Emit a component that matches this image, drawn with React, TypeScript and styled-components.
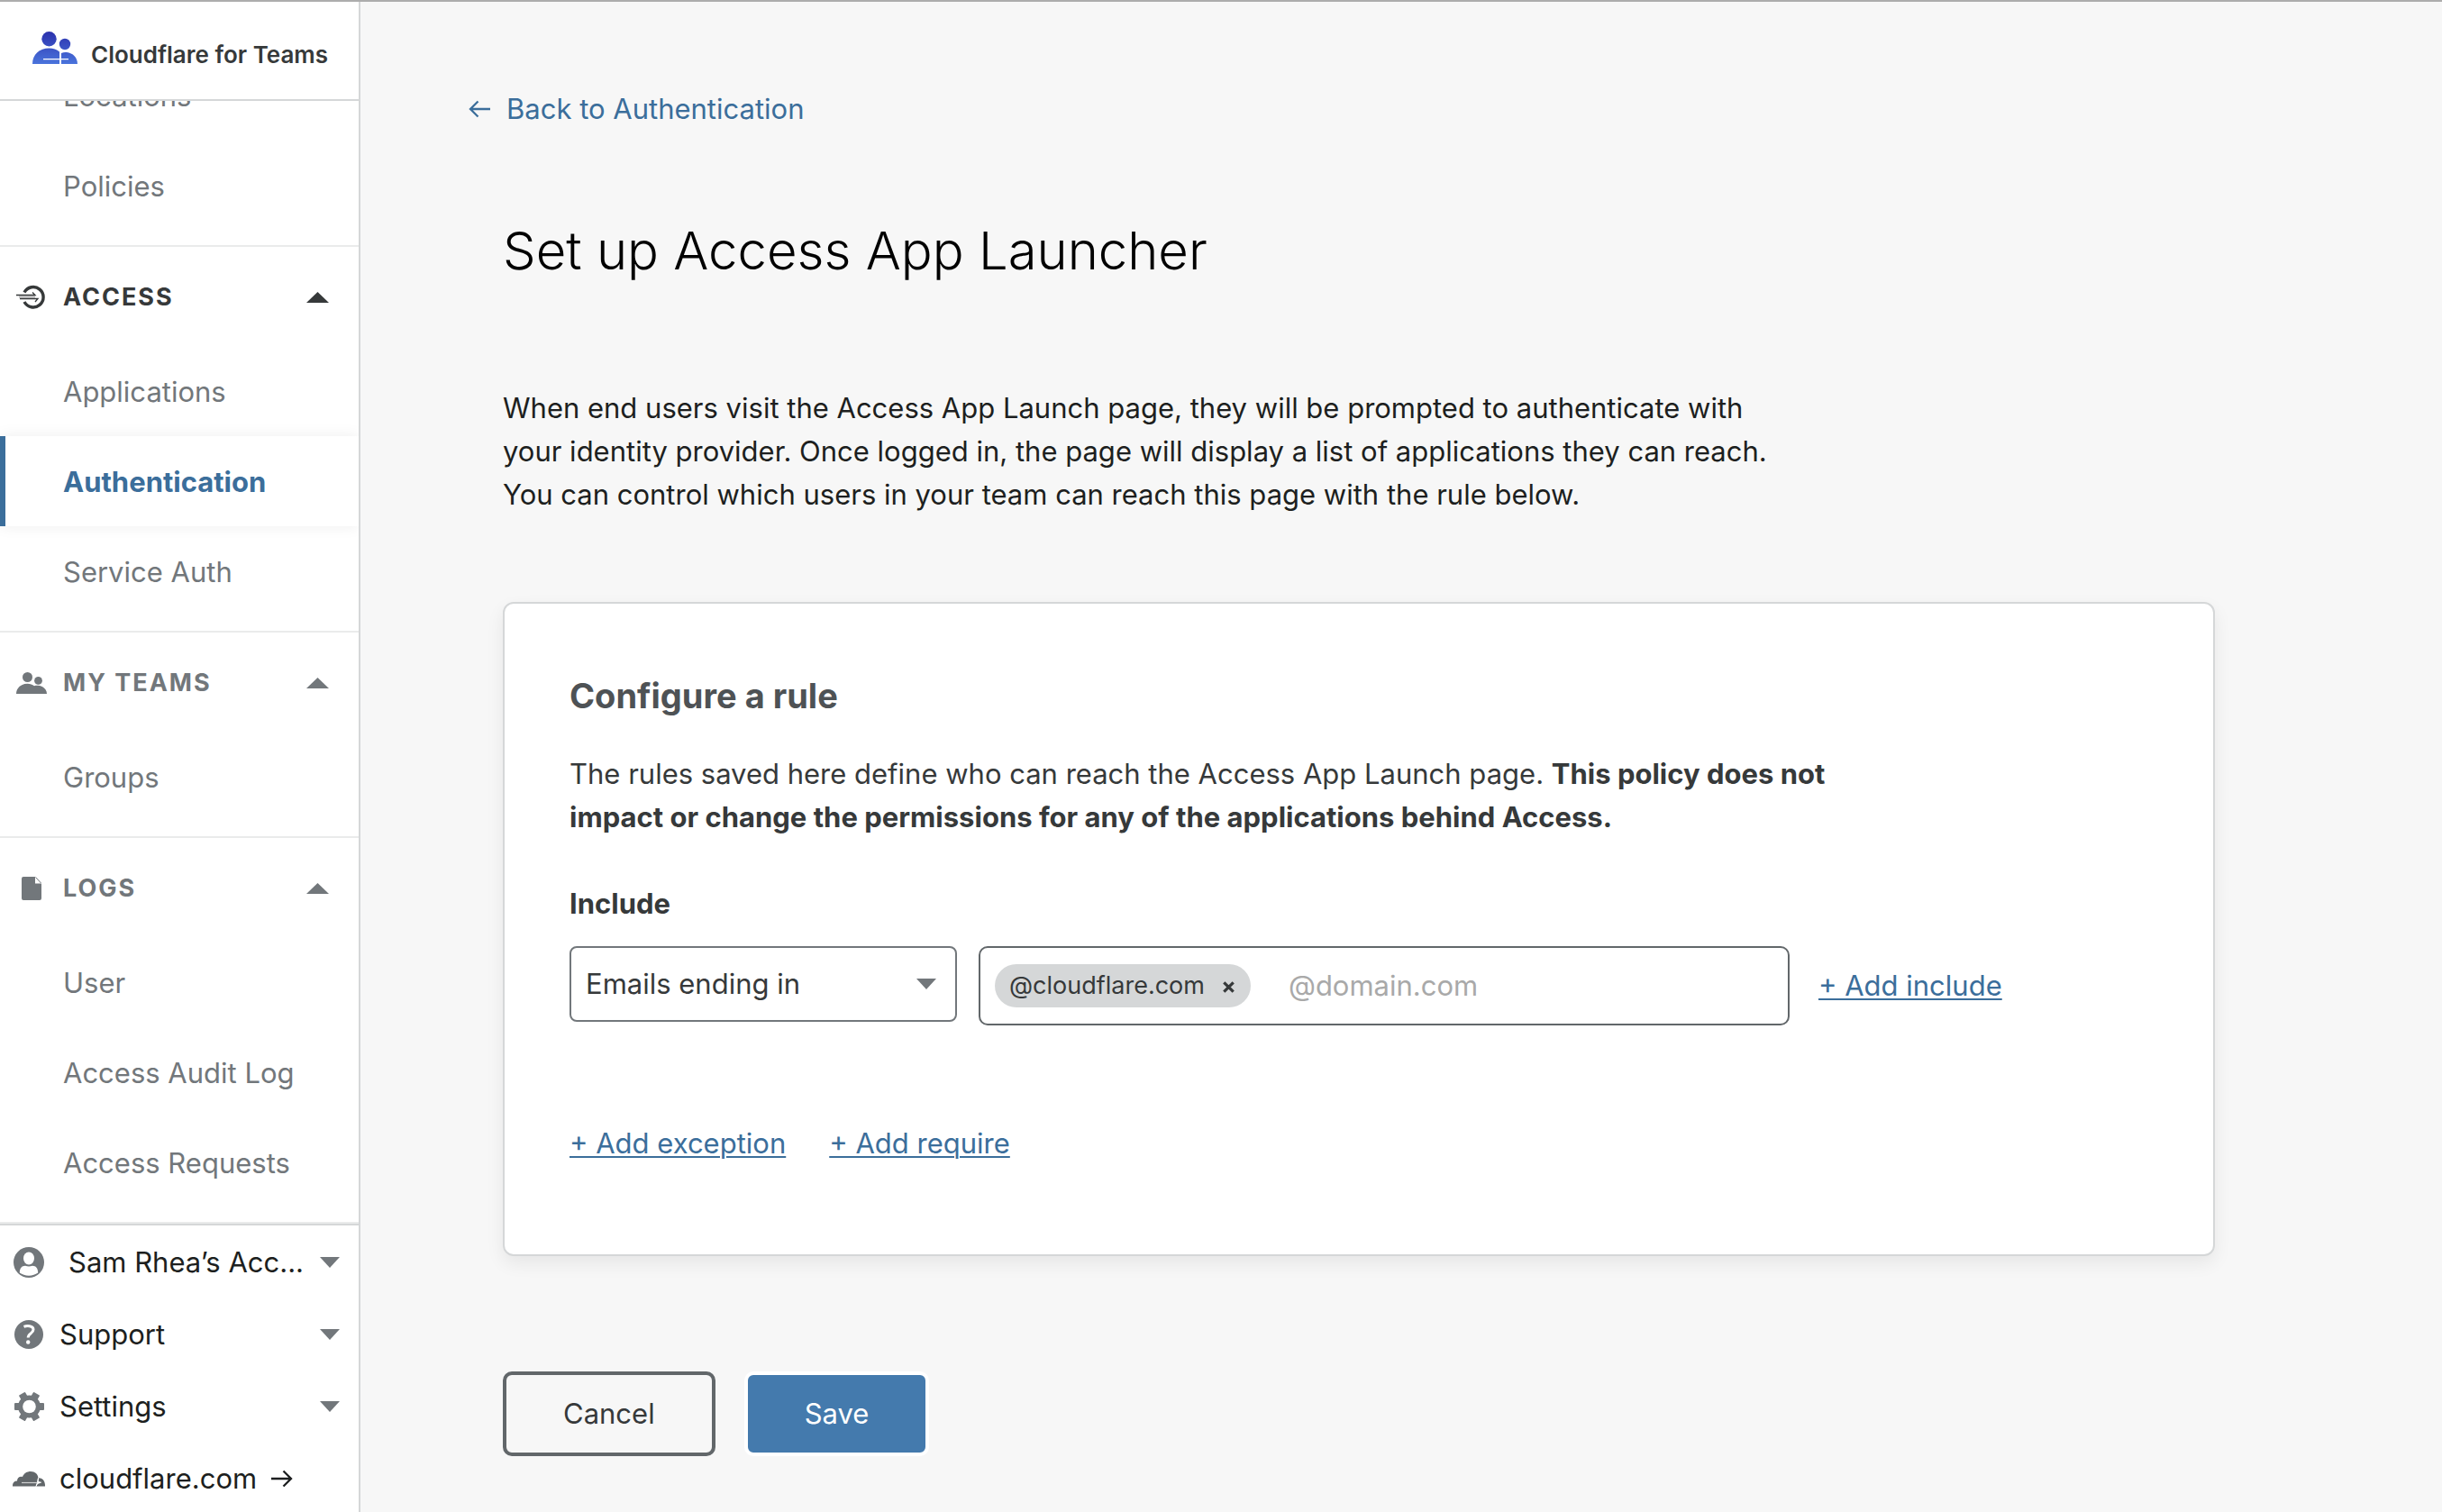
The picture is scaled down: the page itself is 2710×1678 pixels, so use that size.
import React from "react";
import styled, { createGlobalStyle } from "styled-components";

const color = {
  ink: "#1d1f20",
  dark: "#36393a",
  slate: "#4e5255",
  gray: "#72777b",
  frame: "#62676a",
  line: "#d5d7d8",
  hairline: "#eaebeb",
  page: "#f7f7f7",
  link: "#3b6e9b",
  primary: "#447aad",
};

const GlobalStyle = createGlobalStyle`
  *, *::before, *::after { box-sizing: border-box; }
  body { margin: 0; background: ${color.page}; }
  body, button, input, select {
    font-family: Inter, "Liberation Sans", sans-serif;
    font-size: 31px;
    line-height: 48px;
    color: ${color.dark};
  }
  h1, h2, h3, p, ul { margin: 0; padding: 0; }
  ul { list-style: none; }
  svg { display: block; flex: none; }
`;

const Shell = styled.div`
  display: grid;
  grid-template-columns: 400px minmax(0, 1fr);
  height: 100vh;
  border-top: 2px solid #adadad;
  overflow: hidden;
`;

const Sidebar = styled.aside`
  display: flex;
  flex-direction: column;
  min-height: 0;
  background: #fff;
  border-right: 2px solid ${color.line};
`;

const Brand = styled.header`
  flex: none;
  display: flex;
  align-items: center;
  gap: 15px;
  height: 110px;
  padding: 0 0 6px 36px;
  border-bottom: 2px solid ${color.line};
`;

const BrandName = styled.span`
  padding-top: 16px;
  font-size: 26px;
  line-height: 32px;
  font-weight: 600;
  white-space: nowrap;
`;

const Nav = styled.nav`
  flex: 1;
  min-height: 0;
  display: flex;
  flex-direction: column;
  justify-content: flex-end;
  overflow: hidden;
`;

const Section = styled.section`
  flex: none;
  padding-bottom: 16px;
  border-bottom: 2px solid ${color.hairline};
`;

const SectionToggle = styled.button<{ $active?: boolean }>`
  display: grid;
  grid-template-columns: 34px 1fr 25px;
  align-items: center;
  column-gap: 18px;
  width: 100%;
  height: 110px;
  padding: 2px 33px 0 18px;
  border: 0;
  background: none;
  color: ${(p) => (p.$active ? color.dark : color.gray)};
  font-size: 27px;
  font-weight: 700;
  letter-spacing: 2px;
  text-align: left;
  svg { justify-self: center; }
`;

const NavLink = styled.a<{ $active?: boolean }>`
  display: flex;
  align-items: center;
  height: 100px;
  padding-top: 2px;
  padding-left: ${(p) => (p.$active ? 64 : 70)}px;
  border-left: ${(p) => (p.$active ? `6px solid ${color.link}` : "0")};
  box-shadow: ${(p) => (p.$active ? "0 0 16px rgba(0, 0, 0, 0.07)" : "none")};
  color: ${(p) => (p.$active ? color.link : color.gray)};
  font-weight: ${(p) => (p.$active ? 700 : 400)};
  text-decoration: none;
`;

const Utilities = styled.ul`
  flex: none;
  display: flex;
  flex-direction: column;
  gap: 20px;
  border-top: 2px solid ${color.line};
  && { padding: 11px 0 7px; }
`;

const utilityRow = `
  display: flex;
  align-items: center;
  width: 100%;
  height: 60px;
  padding: 0 21px 0 14px;
  border: 0;
  background: none;
  color: ${color.ink};
  text-align: left;
  text-decoration: none;
`;
const UtilityButton = styled.button`${utilityRow}`;
const UtilityLink = styled.a`${utilityRow}`;

const UtilityIcon = styled.span`
  width: 36px;
  margin-right: 16px;
  display: flex;
  justify-content: center;
  color: ${color.gray};
`;

const UtilityText = styled.span<{ $inset?: boolean }>`
  flex: 0 1 auto;
  padding-left: ${(p) => (p.$inset ? 10 : 0)}px;
  margin-right: auto;
  white-space: nowrap;
`;

const LinkText = styled.span`
  margin-right: 16px;
`;

const Main = styled.main`
  min-width: 0;
  padding: 94px 96px 60px 158px;
  background: ${color.page};
`;

const BackLink = styled.a`
  display: inline-flex;
  align-items: center;
  gap: 18px;
  margin-left: -38px;
  color: ${color.link};
  text-decoration: none;
`;

const Title = styled.h1`
  && { margin-top: 93px; }
  color: #000;
  font-size: 58px;
  line-height: 80px;
  font-weight: 300;
`;

const Copy = styled.p`
  max-width: 1430px;
`;

const Intro = styled(Copy)`
  && { margin-top: 111px; }
  color: ${color.ink};
`;

const Card = styled.section`
  max-width: 1900px;
  margin-top: 95px;
  padding: 76px 72px 99px;
  background: #fff;
  border: 2px solid ${color.line};
  border-radius: 12px;
  box-shadow: 0 8px 20px rgba(0, 0, 0, 0.07);
`;

const CardTitle = styled.h2`
  color: ${color.slate};
  font-size: 38px;
  line-height: 52px;
  font-weight: 700;
`;

const CardCopy = styled(Copy)`
  && { margin-top: 37px; }
`;

const Strong = styled.strong`
  font-weight: 700;
`;

const RuleLabel = styled.h3`
  && { margin: 48px 0 23px; }
  font-size: 31px;
  line-height: 48px;
  font-weight: 700;
`;

const RuleRow = styled.div`
  display: flex;
  align-items: flex-start;
  gap: 24px;
`;

const SelectWrap = styled.div`
  flex: none;
  display: grid;
  align-items: center;
  width: 430px;
  > * { grid-area: 1 / 1; }
  > svg { justify-self: end; margin-right: 23px; pointer-events: none; }
`;

const Select = styled.select`
  appearance: none;
  width: 100%;
  height: 84px;
  padding: 0 60px 0 16px;
  border: 2px solid ${color.gray};
  border-radius: 8px;
  background: #fff;
`;

const TagField = styled.div`
  flex: 0 1 900px;
  display: flex;
  align-items: center;
  gap: 42px;
  min-width: 0;
  height: 88px;
  padding: 0 16px;
  border: 2px solid ${color.frame};
  border-radius: 10px;
  background: #fff;
`;

const Tag = styled.span`
  display: flex;
  align-items: center;
  gap: 20px;
  height: 48px;
  padding: 0 18px 0 16px;
  border-radius: 24px;
  background: ${color.line};
  font-size: 27px;
`;

const TagRemove = styled.button`
  padding: 3px 0 0;
  border: 0;
  background: none;
  color: ${color.dark};
`;

const TagInput = styled.input`
  flex: 1;
  min-width: 0;
  padding: 0;
  border: 0;
  outline: 0;
  background: none;
  &::placeholder { color: #a9a9a9; opacity: 1; }
`;

const TextAction = styled.a`
  color: ${color.link};
  text-decoration: underline;
  text-decoration-thickness: 2px;
  text-underline-offset: 3px;
  white-space: nowrap;
`;

const RowAction = styled.div`
  padding: 20px 0 0 8px;
`;

const MoreActions = styled.div`
  display: flex;
  gap: 48px;
  margin-top: 107px;
`;

const FormActions = styled.div`
  display: flex;
  gap: 32px;
  margin-top: 128px;
`;

const Button = styled.button<{ $primary?: boolean }>`
  height: 94px;
  padding: 0 63px;
  border: 4px solid ${(p) => (p.$primary ? "#fff" : color.frame)};
  border-radius: 10px;
  background: ${(p) => (p.$primary ? color.primary : "transparent")};
  color: ${(p) => (p.$primary ? "#fff" : color.dark)};
`;

const TeamsLogo = () => (
  <svg width="50" height="36" viewBox="0 0 50 36" aria-hidden="true">
    <defs>
      <linearGradient id="teams" x1="0" y1="0" x2="0" y2="36" gradientUnits="userSpaceOnUse">
        <stop offset="0" stopColor="#2b31ad" />
        <stop offset="1" stopColor="#4a74dc" />
      </linearGradient>
    </defs>
    <g fill="url(#teams)">
      <circle cx="18.500" cy="8.200" r="8.200" />
      <circle cx="36" cy="14" r="6.200" />
      <path d="M0 36C0 25 8 18.500 18.500 18.500c4.500 0 8.500 1.500 11.500 4V36z" />
      <path d="M32 24c2-1 4-1.200 6-1 7 .8 12 6 12 13H32z" />
    </g>
    <path d="M12 30.600h18M32 30.600h8" stroke="#fff" strokeWidth="1.300" />
    <path d="M31 23v4.500c0 2-.3 2.700-1.500 3 1.200.3 1.500 1.500 1.500 5.500 0-4 .3-5.200 1.500-5.500-1.200-.3-1.500-1-1.500-3z" fill="#fff" stroke="#fff" />
  </svg>
);

const AccessIcon = () => (
  <svg width="34" height="28" viewBox="0 0 34 28" fill="none" stroke="currentColor" aria-hidden="true">
    <path d="M9 8.500A11.200 11.200 0 1 1 9 19" strokeWidth="3.400" />
    <path d="M0 11.500h21l-3-3M4 15.500h20l-3 3.500" strokeWidth="1.300" />
    <path d="M2 11.500h19M4 15.500h19" strokeWidth="1" />
    <path d="M3 13.500h18" strokeWidth="3" opacity=".25" />
  </svg>
);

const TeamIcon = () => (
  <svg width="34" height="24" viewBox="0 0 34 24" fill="currentColor" aria-hidden="true">
    <circle cx="12.500" cy="5.500" r="5.500" />
    <circle cx="24.500" cy="9.400" r="4.400" />
    <path d="M0 24c0-6.500 5.500-11.300 12.500-11.300 3 0 5.500.9 7.500 2.600 1.300-.5 2.600-.6 4-.5 5.600.3 10 4 10 9.200z" />
  </svg>
);

const FileIcon = () => (
  <svg width="22" height="26" viewBox="0 0 22 26" fill="currentColor" aria-hidden="true">
    <path d="M2 0h13v7.500h7V24a2 2 0 0 1-2 2H2a2 2 0 0 1-2-2V2a2 2 0 0 1 2-2z" />
    <path d="M15.500.500l6 6.500" fill="none" stroke="currentColor" />
  </svg>
);

const SectionCaret = () => (
  <svg width="25" height="12" viewBox="0 0 25 12" fill="currentColor" aria-hidden="true">
    <path d="M0 12L12.500 0 25 12z" />
  </svg>
);

const GrayCaret = () => (
  <svg width="22" height="12" viewBox="0 0 22 12" fill={color.gray} aria-hidden="true">
    <path d="M0 0h22L11 12z" />
  </svg>
);

const UserIcon = () => (
  <svg width="34" height="34" viewBox="0 0 34 34" aria-hidden="true">
    <circle cx="17" cy="17" r="17" fill="currentColor" />
    <ellipse cx="17" cy="12.500" rx="6" ry="7" fill="#fff" />
    <path d="M6.800 28.500c0-5 2.500-7.700 6.200-7.700 1.500.5 2.700.7 4 .7s2.500-.2 4-.7c3.700 0 6.200 2.700 6.200 7.700-2.800 2-6.300 3.200-10.200 3.200s-7.400-1.200-10.200-3.200z" fill="#fff" />
  </svg>
);

const HelpIcon = () => (
  <svg width="32" height="32" viewBox="0 0 32 32" aria-hidden="true">
    <circle cx="16" cy="16" r="16" fill="currentColor" />
    <path d="M10.500 7.300c3-1.200 10.500-1.600 10.500 3.200 0 4.500-5.800 4.300-5.800 9" fill="none" stroke="#fff" strokeWidth="3" />
    <circle cx="15.200" cy="24.500" r="2.200" fill="#fff" />
  </svg>
);

const GearIcon = () => (
  <svg width="33" height="32" viewBox="0 0 33 32" aria-hidden="true">
    <g fill="currentColor">
      <circle cx="16.500" cy="16" r="12.500" />
      {[0, 60, 120].map((a) => (
        <rect key={a} x="0" y="12" width="33" height="8" rx="1" transform={`rotate(${a} 16.500 16)`} />
      ))}
    </g>
    <circle cx="16.500" cy="16" r="7.300" fill="#fff" />
  </svg>
);

const CloudIcon = () => (
  <svg width="36" height="17" viewBox="0 0 36 17" aria-hidden="true">
    <path d="M0 16.500c-.3-3.500 1.500-6 5-6C5 7 8 5 11 6c1.500-4 5-6 9-6 5 0 8 3 8.500 7.200 4.500-.5 7.800 3 7.500 9.300z" fill="#62676a" />
    <path d="M10 12.500h17" stroke="#fff" strokeWidth="1.200" opacity=".7" />
    <path d="M28.500 7.200l-1 5-1.500 4.300 1.500-3 4-1.300-3.500-.7z" fill="#fff" stroke="#fff" />
  </svg>
);

const Arrow = ({ left }: { left?: boolean }) => (
  <svg width="24" height="20" viewBox="0 0 24 20" fill="none" stroke="currentColor" strokeWidth="2.300" aria-hidden="true">
    <path d={left ? "M24 10H2M10.500 1.500L2 10l8.500 8.500" : "M0 10h22M13.500 1.500L22 10l-8.500 8.500"} />
  </svg>
);

const CloseIcon = () => (
  <svg width="13" height="13" viewBox="0 0 13 13" stroke="currentColor" strokeWidth="3.200" aria-hidden="true">
    <path d="M1.300 1.300l10.400 10.400M11.700 1.300L1.300 11.700" />
  </svg>
);

type Group = { title?: string; icon?: React.ReactNode; active?: boolean; items: string[] };

const groups: Group[] = [
  { items: ["Locations", "Policies"] },
  { title: "ACCESS", icon: <AccessIcon />, active: true, items: ["Applications", "Authentication", "Service Auth"] },
  { title: "MY TEAMS", icon: <TeamIcon />, items: ["Groups"] },
  { title: "LOGS", icon: <FileIcon />, items: ["User", "Access Audit Log", "Access Requests"] },
];

const utilities = [
  { label: "Sam Rhea’s Acc...", icon: <UserIcon />, inset: true },
  { label: "Support", icon: <HelpIcon /> },
  { label: "Settings", icon: <GearIcon /> },
];

export default function App() {
  return (
    <>
      <GlobalStyle />
      <Shell>
        <Sidebar>
          <Brand>
            <TeamsLogo />
            <BrandName>Cloudflare for Teams</BrandName>
          </Brand>
          <Nav>
            {groups.map((group) => (
              <Section key={group.items[0]}>
                {group.title && (
                  <SectionToggle $active={group.active} aria-expanded="true">
                    {group.icon}
                    <span>{group.title}</span>
                    <SectionCaret />
                  </SectionToggle>
                )}
                <ul>
                  {group.items.map((item) => (
                    <li key={item}>
                      <NavLink href="#" $active={item === "Authentication"}>{item}</NavLink>
                    </li>
                  ))}
                </ul>
              </Section>
            ))}
          </Nav>
          <Utilities>
            {utilities.map((u) => (
              <li key={u.label}>
                <UtilityButton>
                  <UtilityIcon>{u.icon}</UtilityIcon>
                  <UtilityText $inset={u.inset}>{u.label}</UtilityText>
                  <GrayCaret />
                </UtilityButton>
              </li>
            ))}
            <li>
              <UtilityLink href="#">
                <UtilityIcon><CloudIcon /></UtilityIcon>
                <LinkText>cloudflare.com</LinkText>
                <Arrow />
              </UtilityLink>
            </li>
          </Utilities>
        </Sidebar>
        <Main>
          <BackLink href="#">
            <Arrow left />
            Back to Authentication
          </BackLink>
          <Title>Set up Access App Launcher</Title>
          <Intro>
            When end users visit the Access App Launch page, they will be prompted to authenticate with
            your identity provider. Once logged in, the page will display a list of applications they can reach.
            You can control which users in your team can reach this page with the rule below.
          </Intro>
          <Card>
            <CardTitle>Configure a rule</CardTitle>
            <CardCopy>
              The rules saved here define who can reach the Access App Launch page.{" "}
              <Strong>
                This policy does not impact or change the permissions for any of the applications behind Access.
              </Strong>
            </CardCopy>
            <RuleLabel id="include">Include</RuleLabel>
            <RuleRow>
              <SelectWrap>
                <Select aria-labelledby="include" defaultValue="ending">
                  <option value="ending">Emails ending in</option>
                </Select>
                <GrayCaret />
              </SelectWrap>
              <TagField>
                <Tag>
                  @cloudflare.com
                  <TagRemove aria-label="Remove @cloudflare.com"><CloseIcon /></TagRemove>
                </Tag>
                <TagInput aria-label="Email domain" placeholder="@domain.com" />
              </TagField>
              <RowAction>
                <TextAction href="#">+ Add include</TextAction>
              </RowAction>
            </RuleRow>
            <MoreActions>
              <TextAction href="#">+ Add exception</TextAction>
              <TextAction href="#">+ Add require</TextAction>
            </MoreActions>
          </Card>
          <FormActions>
            <Button>Cancel</Button>
            <Button $primary>Save</Button>
          </FormActions>
        </Main>
      </Shell>
    </>
  );
}
